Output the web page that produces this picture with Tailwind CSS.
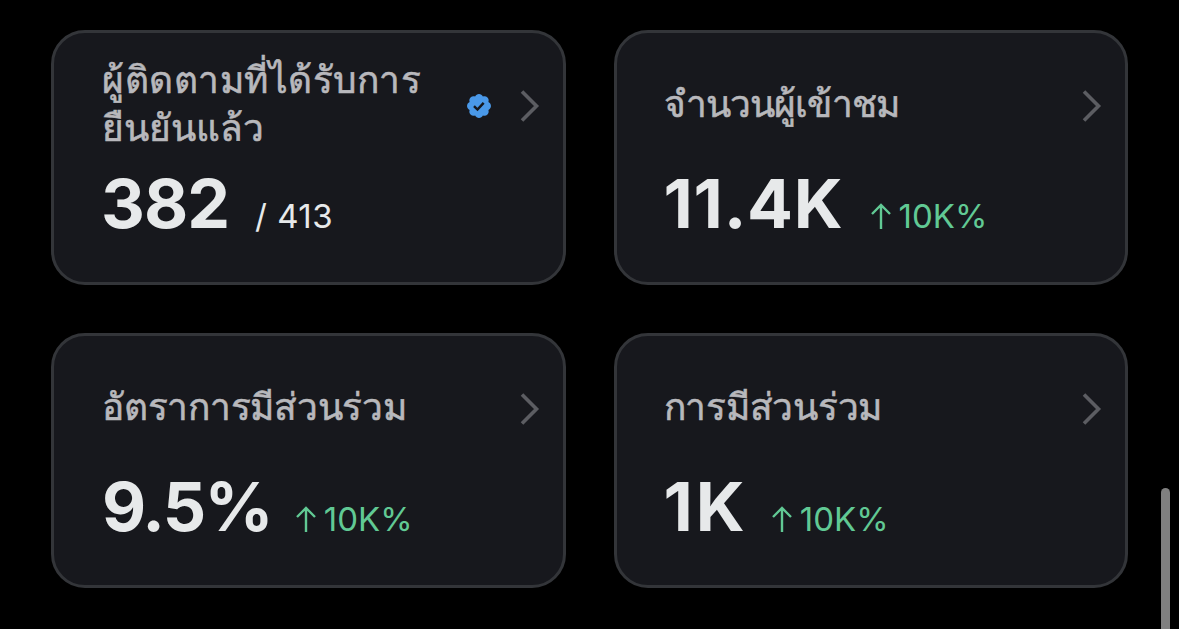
<!DOCTYPE html>
<html lang="th">
<head>
    <meta charset="UTF-8">
    <meta name="viewport" content="width=device-width, initial-scale=1.0">
    <title>Analytics</title>
    <script src="https://cdn.jsdelivr.net/npm/@tailwindcss/browser@4"></script>
</head>
<body class="bg-black h-screen overflow-hidden font-['Inter',sans-serif]">
    <main class="grid grid-cols-2 gap-12 px-[51px] pt-[30px]">
        <!-- Verified followers -->
        <section class="h-[255px] rounded-[34px] border-[3px] border-[#333539] bg-[#17181d] pl-12 pr-[23px] pt-[22px]">
            <div class="flex h-[101px] items-center">
                <h2 class="flex-1 pb-1.5 whitespace-nowrap font-['Noto_Sans',sans-serif] text-[37px] leading-[48px] text-[#b8b8bc] [-webkit-text-stroke:0.6px]"><span class="tracking-[0.5px]">ผู้ติดตามที่ได้รับการ</span><br>ยืนยันแล้ว</h2>
                <svg class="mr-[27px] size-7" viewBox="0 0 24 24" fill="none">
                    <path fill="#4a99e9" d="M22.25 12c0-1.43-.88-2.67-2.19-3.34.46-1.39.2-2.9-.81-3.91s-2.52-1.27-3.91-.81c-.66-1.31-1.91-2.19-3.34-2.19s-2.67.88-3.33 2.19c-1.4-.46-2.91-.2-3.92.81s-1.26 2.52-.8 3.91c-1.31.67-2.2 1.91-2.2 3.34s.89 2.67 2.2 3.34c-.46 1.39-.21 2.9.8 3.91s2.52 1.26 3.91.81c.67 1.31 1.91 2.19 3.34 2.19s2.68-.88 3.34-2.19c1.39.45 2.9.2 3.91-.81s1.27-2.52.81-3.91c1.31-.67 2.19-1.91 2.19-3.34z"></path>
                    <path d="M7.7 12.2l3 2.9 5.3-5.8" stroke="#17181d" stroke-width="2.1"></path>
                </svg>
                <svg class="h-8 w-5" viewBox="0 0 20 32" fill="none" stroke="#5c5d62" stroke-width="3.6">
                    <path d="M2 1.5l14.5 14.5-14.5 14.5"></path>
                </svg>
            </div>
            <div class="flex items-baseline pt-[3px] text-[#e7e9ea]">
                <span class="-ml-px text-[68px] leading-[88px] font-bold tracking-[-1px]">382</span>
                <span class="ml-[26px] text-[33px] tracking-[0.5px]">/ 413</span>
            </div>
        </section>

        <!-- Visitors -->
        <section class="h-[255px] rounded-[34px] border-[3px] border-[#333539] bg-[#17181d] pl-[47px] pr-[23px] pt-[22px]">
            <div class="flex h-[101px] items-center">
                <h2 class="flex-1 pb-1.5 whitespace-nowrap font-['Noto_Sans',sans-serif] text-[37px] leading-[48px] tracking-[-0.85px] text-[#b8b8bc] [-webkit-text-stroke:0.6px]">จำนวนผู้เข้าชม</h2>
                <svg class="h-8 w-5" viewBox="0 0 20 32" fill="none" stroke="#5c5d62" stroke-width="3.6">
                    <path d="M2 1.5l14.5 14.5-14.5 14.5"></path>
                </svg>
            </div>
            <div class="flex items-baseline pt-[3px]">
                <span class="text-[68px] leading-[88px] font-bold tracking-[0.75px] text-[#e7e9ea]">11.4K</span>
                <div class="ml-[27px] flex items-baseline gap-2 text-[33px] text-[#61c994]">
                    <svg class="h-[26px] w-5 translate-y-px" viewBox="0 0 20 26" fill="none" stroke="currentColor" stroke-width="2.4">
                        <path d="M10 26V2M1 11l9-9 9 9"></path>
                    </svg>
                    <span>10K%</span>
                </div>
            </div>
        </section>

        <!-- Engagement rate -->
        <section class="h-[255px] rounded-[34px] border-[3px] border-[#333539] bg-[#17181d] pl-12 pr-[23px] pt-[22px]">
            <div class="flex h-[101px] items-center">
                <h2 class="flex-1 pb-1.5 whitespace-nowrap font-['Noto_Sans',sans-serif] text-[37px] leading-[48px] tracking-[-0.25px] text-[#b8b8bc] [-webkit-text-stroke:0.6px]">อัตราการมีส่วนร่วม</h2>
                <svg class="h-8 w-5" viewBox="0 0 20 32" fill="none" stroke="#5c5d62" stroke-width="3.6">
                    <path d="M2 1.5l14.5 14.5-14.5 14.5"></path>
                </svg>
            </div>
            <div class="flex items-baseline pt-[3px]">
                <span class="text-[68px] leading-[88px] font-bold tracking-[-1.8px] text-[#e7e9ea]">9.5%</span>
                <div class="ml-6 flex items-baseline gap-2 text-[33px] text-[#61c994]">
                    <svg class="h-[26px] w-5 translate-y-px" viewBox="0 0 20 26" fill="none" stroke="currentColor" stroke-width="2.4">
                        <path d="M10 26V2M1 11l9-9 9 9"></path>
                    </svg>
                    <span>10K%</span>
                </div>
            </div>
        </section>

        <!-- Engagements -->
        <section class="h-[255px] rounded-[34px] border-[3px] border-[#333539] bg-[#17181d] pl-[47px] pr-[23px] pt-[22px]">
            <div class="flex h-[101px] items-center">
                <h2 class="flex-1 pb-1.5 whitespace-nowrap font-['Noto_Sans',sans-serif] text-[37px] leading-[48px] tracking-[-0.25px] text-[#b8b8bc] [-webkit-text-stroke:0.6px]">การมีส่วนร่วม</h2>
                <svg class="h-8 w-5" viewBox="0 0 20 32" fill="none" stroke="#5c5d62" stroke-width="3.6">
                    <path d="M2 1.5l14.5 14.5-14.5 14.5"></path>
                </svg>
            </div>
            <div class="flex items-baseline pt-[3px]">
                <span class="text-[68px] leading-[88px] font-bold tracking-[3px] text-[#e7e9ea]">1K</span>
                <div class="ml-6 flex items-baseline gap-2 text-[33px] text-[#61c994]">
                    <svg class="h-[26px] w-5 translate-y-px" viewBox="0 0 20 26" fill="none" stroke="currentColor" stroke-width="2.4">
                        <path d="M10 26V2M1 11l9-9 9 9"></path>
                    </svg>
                    <span>10K%</span>
                </div>
            </div>
        </section>
    </main>

    <!-- Scroll indicator -->
    <div class="fixed right-[9px] top-[488px] h-40 w-[9px] rounded-full bg-[#808080]"></div>
</body>
</html>
